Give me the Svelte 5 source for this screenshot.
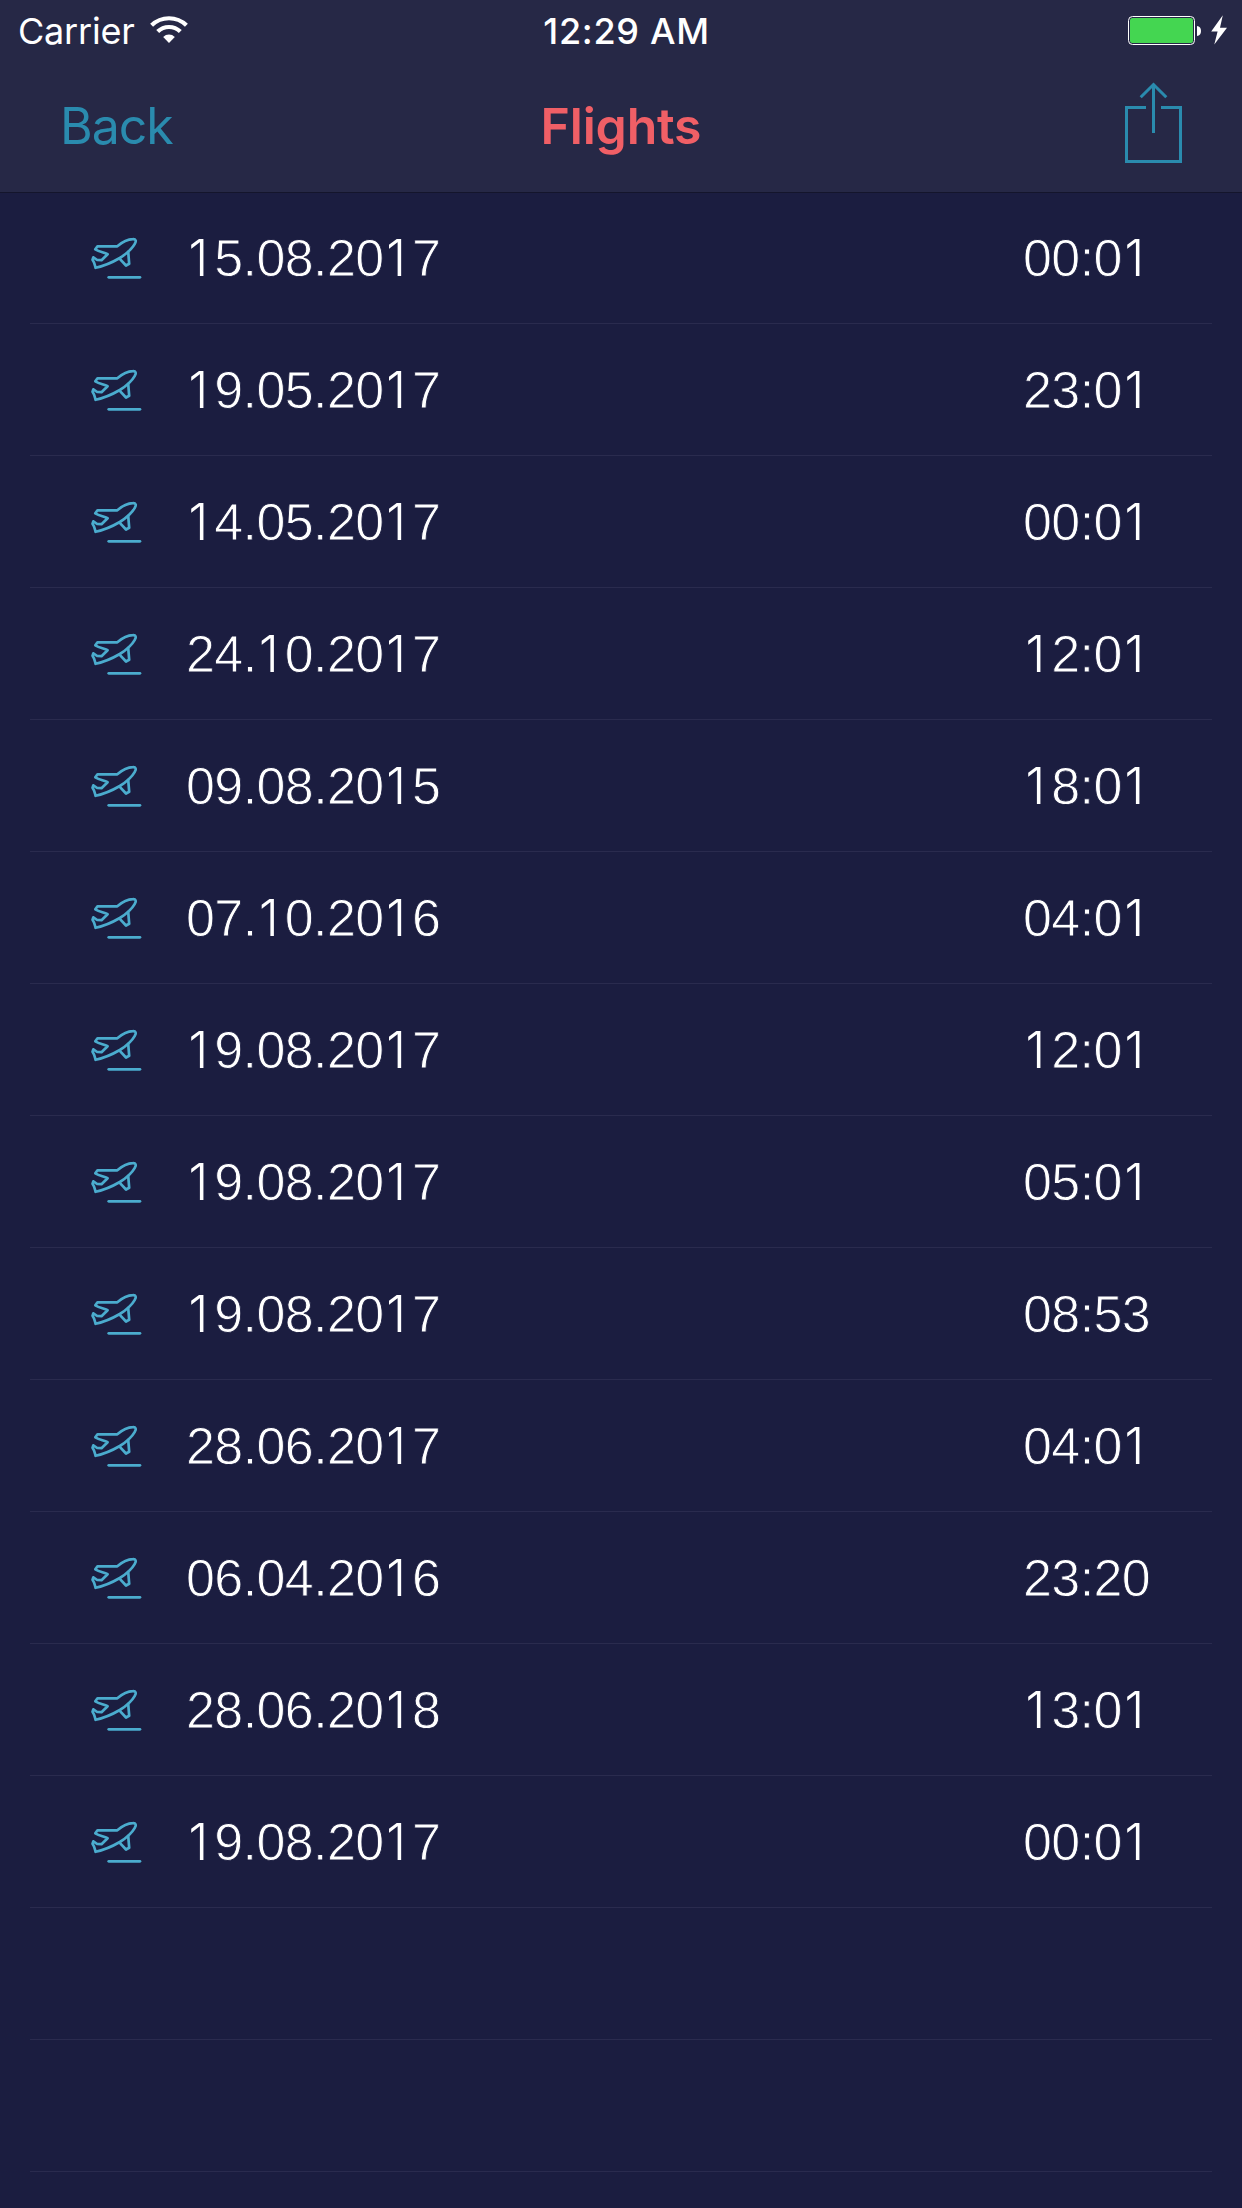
<script>
  const flights = [
    ['15.08.2017', '00:01'],
    ['19.05.2017', '23:01'],
    ['14.05.2017', '00:01'],
    ['24.10.2017', '12:01'],
    ['09.08.2015', '18:01'],
    ['07.10.2016', '04:01'],
    ['19.08.2017', '12:01'],
    ['19.08.2017', '05:01'],
    ['19.08.2017', '08:53'],
    ['28.06.2017', '04:01'],
    ['06.04.2016', '23:20'],
    ['28.06.2018', '13:01'],
    ['19.08.2017', '00:01']
  ];
  const emptyRows = [1, 2];
  // The digit 1 is set in a face without a foot serif.
  const runs = (text) => text.split(/(1)/).filter(Boolean);
</script>

{#snippet digits(text)}{#each runs(text) as run}{#if run === '1'}<span class="one">1</span>{:else}{run}{/if}{/each}{/snippet}

<div class="screen">
  <header>
    <div class="status">
      <div class="carrier">
        <span>Carrier</span>
        <svg class="wifi" width="38" height="28" viewBox="0 0 38 28">
          <g fill="none" stroke="#fff" stroke-width="4.2">
            <path d="M1.6 9.3A25 25 0 0 1 36.4 9.3" />
            <path d="M7.7 15.6A16.2 16.2 0 0 1 30.3 15.6" />
          </g>
          <path d="M13.2 20.9A8.2 8.2 0 0 1 24.8 20.9L19 27Z" fill="#fff" />
        </svg>
      </div>
      <span class="clock">12:29 AM</span>
      <div class="power">
        <svg width="99" height="30" viewBox="0 0 99 30">
          <rect x="0.5" y="1.5" width="66" height="28" rx="4" fill="none" stroke="#fff" />
          <rect x="2" y="3" width="63" height="25" rx="2.5" fill="#44d651" />
          <path d="M69 11Q73 11.5 73 16T69 21Z" fill="#fff" />
          <path d="M94.8 0.3L83.2 16.4H89.6L86.3 29.6L99 12.7H92Z" fill="#fff" />
        </svg>
      </div>
    </div>
    <nav>
      <span class="back">Back</span>
      <span class="title">Flights</span>
      <svg class="share" width="57" height="82" viewBox="0 0 57 82" fill="none" stroke="#2a8bae" stroke-width="3">
        <path d="M21 25.5H1.5V79.5H55.5V25.5H36" />
        <path d="M28.5 51V3" />
        <path d="M15.7 15.3L28.5 2.5L41.3 15.3" />
      </svg>
    </nav>
  </header>
  <ul>
    {#each flights as [date, time]}
      <li>
        <svg class="plane" width="56" height="66" viewBox="0 0 56 66" fill="none" stroke="#4bacce" stroke-width="2.7" stroke-linecap="round" stroke-linejoin="round">
          <path d="M5.6 42.8C4.9 40.3 4.8 38 2.5 34.8L3.3 32.3L7.2 35L11.5 35.2L17.6 29.2C14 27.2 9.8 27 5.3 24.3L7.5 21.3H27.3C33 16.5 38 14.3 42.8 14.2C46 14 46.5 16 44.8 18.8C41.5 24.6 36 29 29.8 33C22.5 37.3 14 40.9 5.6 42.8Z" />
          <path d="M29.8 33.8L36 40.5L39.2 38.8L38.2 26.8" />
          <path d="M18.7 52.3H50" />
        </svg>
        <span class="date">{@render digits(date)}</span>
        <span class="time">{@render digits(time)}</span>
      </li>
    {/each}
    {#each emptyRows as row (row)}
      <li></li>
    {/each}
  </ul>
</div>

<style>
  :global(body) {
    background: #1b1d40;
  }
  .screen {
    width: 1242px;
    height: 2208px;
    overflow: hidden;
    background: #1b1d40;
    font-family: Inter, 'Liberation Sans', sans-serif;
  }
  header {
    height: 192px;
    background: #262846;
    box-shadow: 0 1px 0 #14152c;
    position: relative;
  }
  .status {
    height: 60px;
    display: grid;
    grid-template-columns: 1fr auto 1fr;
    align-items: center;
    color: #fff;
    font-size: 36px;
    line-height: 60px;
    padding: 1px 15px 0 18px;
    box-sizing: border-box;
  }
  .carrier {
    display: flex;
    align-items: center;
    gap: 15px;
    letter-spacing: -0.2px;
  }
  .wifi {
    margin-bottom: 2px;
  }
  .clock {
    font-weight: 500;
    letter-spacing: 0.7px;
    padding-left: 8px;
  }
  .power {
    display: flex;
    justify-content: flex-end;
    padding-bottom: 3px;
  }
  nav {
    height: 132px;
    display: grid;
    grid-template-columns: 1fr auto 1fr;
    align-items: center;
    padding: 0 60px;
    font-size: 50px;
    line-height: 132px;
  }
  .back {
    color: #2a8bae;
    letter-spacing: -1px;
  }
  .title {
    color: #f05f66;
    font-weight: 600;
    letter-spacing: -0.2px;
  }
  .share {
    justify-self: end;
    margin-bottom: 6px;
  }
  ul {
    margin: 0;
    padding: 0 30px;
    list-style: none;
  }
  li {
    height: 132px;
    box-sizing: border-box;
    border-bottom: 1px solid #2a2b4e;
    display: flex;
    align-items: center;
    padding: 0 60px;
    font-family: 'Liberation Sans', Arial, sans-serif;
    font-size: 52px;
    letter-spacing: -0.6px;
    line-height: 60px;
    color: #fff;
  }
  li:nth-child(n + 14) {
    padding: 0;
  }
  .date,
  .time {
    padding-top: 1px;
    white-space: nowrap;
    -webkit-text-stroke: 0.9px #1b1d40;
  }
  .one {
    display: inline-block;
    box-sizing: border-box;
    width: 28.3px;
    padding-right: 6px;
    text-align: right;
    font-family: Inter, sans-serif;
    font-size: 50px;
    font-weight: 300;
    letter-spacing: 0;
    line-height: 1;
    -webkit-text-stroke: 0;
  }
  .date {
    margin-left: 40px;
  }
  .time {
    margin-left: auto;
    width: 129px;
  }
</style>
